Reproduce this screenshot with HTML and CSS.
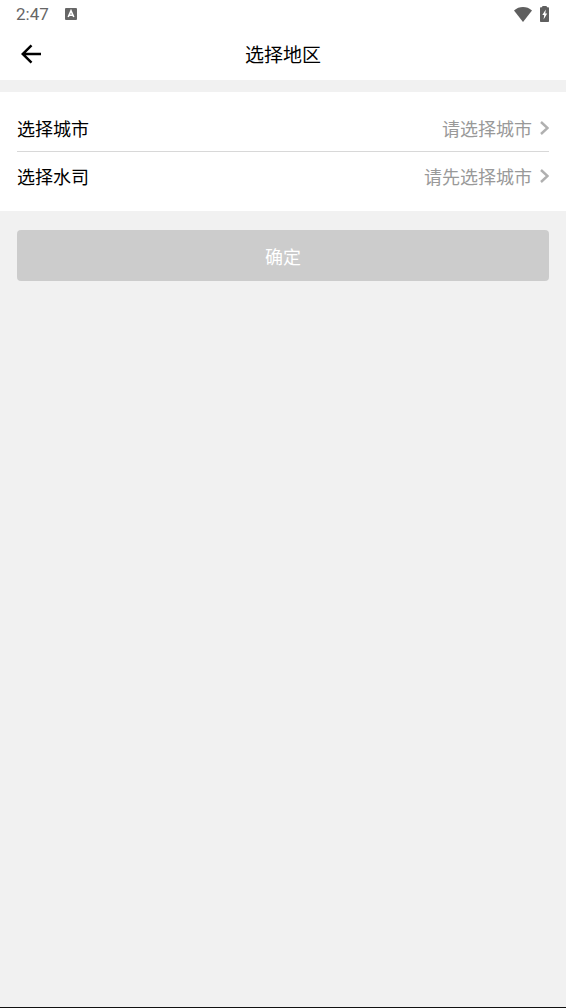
FILE: index.html
```html
<!DOCTYPE html>
<html lang="zh-CN">
<head>
<meta charset="utf-8">
<meta name="viewport" content="width=device-width, initial-scale=1">
<title>选择地区</title>
<link rel="stylesheet" href="styles.css">
</head>
<body>
<div class="screen">
  <div class="status-bar">
    <span class="clock">2:47</span>
    <svg class="app-icon" width="12" height="12" viewBox="0 0 12 12" aria-hidden="true">
      <rect width="12" height="12" rx="1" fill="#666"/>
      <path d="M3.2 9 6 2.8 8.8 9M4.3 7.2h3.4" fill="none" stroke="#fff" stroke-width="1.6"/>
    </svg>
    <svg class="wifi" width="18" height="15" viewBox="0 0 18 15" aria-hidden="true">
      <path d="M0 3.4C5.2-1.1 12.8-1.1 18 3.4L9 15z" fill="#5f5f5f"/>
    </svg>
    <svg class="battery" width="9" height="16" viewBox="0 0 9 16" aria-hidden="true">
      <path d="M2.500 0h4L7 1.300h1.200a.8.8 0 0 1 .8.8V15.200a.8.8 0 0 1-.8.8H.8a.8.8 0 0 1-.8-.8V2.100a.8.8 0 0 1 .8-.8H2z" fill="#5f5f5f"/>
      <path d="M5.800 3.500 2.300 9h1.900l-.6 4.500L7.200 7.600H5.300z" fill="#fff"/>
    </svg>
  </div>
  <header class="nav-bar">
    <button class="back" type="button" aria-label="返回">
      <svg width="20" height="20" viewBox="0 0 20 20" aria-hidden="true">
        <path d="M20 10H2M10.500 1.300 1.700 10l8.800 8.700" fill="none" stroke="#000" stroke-width="2.500"/>
      </svg>
    </button>
    <h1 class="title">选择地区</h1>
  </header>
  <main class="content">
    <section class="card">
      <button class="row" type="button">
        <span class="label">选择城市</span>
        <span class="value">请选择城市</span>
        <svg class="chevron" width="9" height="14" viewBox="0 0 9 14" aria-hidden="true"><path d="M1 1l6.500 6L1 13" fill="none" stroke="#b0b0b0" stroke-width="2.400"/></svg>
      </button>
      <button class="row" type="button">
        <span class="label">选择水司</span>
        <span class="value">请先选择城市</span>
        <svg class="chevron" width="9" height="14" viewBox="0 0 9 14" aria-hidden="true"><path d="M1 1l6.500 6L1 13" fill="none" stroke="#b0b0b0" stroke-width="2.400"/></svg>
      </button>
    </section>
    <button class="confirm" type="button" disabled>确定</button>
  </main>
</div>
</body>
</html>
```
FILE: styles.css
```css
* {
  box-sizing: border-box;
}

body {
  margin: 0;
  background: #f1f1f1;
  color: #000;
  font-family: "Noto Sans CJK SC", sans-serif;
}

button {
  margin: 0;
  padding: 0;
  border: 0;
  background: none;
  color: inherit;
  font: inherit;
}

.screen {
  display: flex;
  flex-direction: column;
  min-height: 100vh;
  border-bottom: 1px solid #111;
}

.status-bar {
  display: flex;
  align-items: center;
  height: 28px;
  padding: 0 17px 0 16px;
  background: #fff;
}

.clock {
  color: #666;
  font: 17px/28px Roboto, sans-serif;
}

.app-icon {
  margin-left: 16px;
}

.wifi {
  margin-left: auto;
}

.battery {
  margin-left: 8px;
}

.nav-bar {
  display: grid;
  grid-template-columns: 48px 1fr 48px;
  align-items: center;
  height: 52px;
  background: #fff;
}

.back {
  display: flex;
  align-items: center;
  height: 48px;
  padding-left: 21px;
}

.title {
  margin: 0;
  font-size: 19px;
  font-weight: 400;
  line-height: 28px;
  text-align: center;
}

.content {
  flex: 1;
  padding-top: 12px;
}

.card {
  padding: 12px 17px 11px;
  background: #fff;
}

.row {
  display: flex;
  align-items: center;
  width: 100%;
  height: 48px;
  font-size: 18px;
  line-height: 26px;
}

.row:first-child {
  border-bottom: 1px solid #d8d8d8;
}

.value {
  margin-left: auto;
  color: #999;
}

.chevron {
  margin-left: 8px;
}

.confirm {
  display: block;
  width: calc(100% - 34px);
  height: 51px;
  margin: 19px 17px;
  border-radius: 4px;
  background: #ccc;
  color: #fff;
  font-size: 18px;
}
```
